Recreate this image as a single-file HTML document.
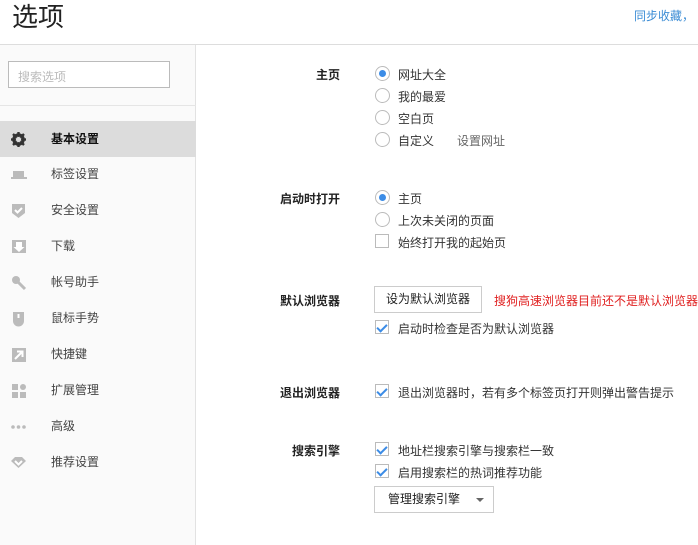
<!DOCTYPE html>
<html><head><meta charset="utf-8"><style>
*{margin:0;padding:0;box-sizing:border-box}
body{width:698px;height:545px;overflow:hidden;background:#fff;font-family:"Liberation Sans","Noto Sans CJK SC",sans-serif;font-size:12px;color:#333;position:relative}
.abs{position:absolute;white-space:nowrap}
.title{left:12px;top:0;font-size:26px;color:#222;line-height:34px}
.sync{right:4px;top:7px;color:#3c8dd5;font-size:12px}
.hline{left:0;top:44px;width:698px;height:1px;background:#ddd}
.side{left:0;top:45px;width:196px;height:500px;background:#fafafa;border-right:1px solid #e2e2e2}
.search{left:8px;top:61px;width:162px;height:27px;border:1px solid #bbb;background:#fff;color:#bbb;padding:6px 9px;font-size:12px}
.sep{left:0;top:105px;width:196px;height:1px;background:#e5e5e5}
.item{left:0;width:196px;height:36px;line-height:36px;padding-left:51px;font-size:12px;color:#444}
.item.sel{background:#dcdcdc;color:#111;font-weight:bold}
.ic{position:absolute;left:10px;top:10px;width:17px;height:17px}
.lbl{font-weight:bold;color:#222;text-align:right;width:120px;left:220px}
.radio{width:15px;height:15px;border:1px solid #bbb;border-radius:50%;background:#fff}
.radio.on::after{content:"";position:absolute;left:3px;top:3px;width:7px;height:7px;border-radius:50%;background:#3c8ce6}
.cb{width:14px;height:14px;border:1px solid #bbb;background:#fff}
.cb.on::after{content:"";position:absolute;left:3px;top:1px;width:4px;height:8px;border:solid #3c8ce6;border-width:0 2px 2px 0;transform:rotate(45deg)}
.t{color:#333}
.btn{border:1px solid #ccc;background:#fff;color:#222;text-align:center;line-height:25px}
</style></head><body>
<div class="abs title">选项</div>
<div class="abs sync">同步收藏，</div>
<div class="abs hline"></div>
<div class="abs side"></div>
<div class="abs search">搜索选项</div>
<div class="abs sep"></div>

<div class="abs item sel" style="top:121px"><svg class="ic" viewBox="0 0 17 17"><circle cx="8.5" cy="8.5" r="5" fill="none" stroke="#333" stroke-width="2.6"/><g stroke="#333" stroke-width="2.4"><line x1="8.5" y1="1" x2="8.5" y2="16"/><line x1="1" y1="8.5" x2="16" y2="8.5"/><line x1="3" y1="3" x2="14" y2="14"/><line x1="14" y1="3" x2="3" y2="14"/></g><circle cx="8.5" cy="8.5" r="2.6" fill="#dcdcdc"/></svg>基本设置</div>
<div class="abs item" style="top:156px"><svg class="ic" viewBox="0 0 17 17"><rect x="3" y="5" width="11" height="6" fill="#bbb"/><rect x="1" y="11" width="16" height="2" fill="#bbb"/></svg>标签设置</div>
<div class="abs item" style="top:192px"><svg class="ic" viewBox="0 0 17 17"><path d="M2 2h13v9l-6.5 5L2 11z" fill="#bbb"/><path d="M5 8l2.5 2.5L12 6" stroke="#fff" stroke-width="2" fill="none"/></svg>安全设置</div>
<div class="abs item" style="top:228px"><svg class="ic" viewBox="0 0 17 17"><rect x="2" y="2" width="14" height="13" fill="#bbb"/><path d="M6 4v5H3.5l5.5 5 5.5-5H12V4z" fill="#fff"/></svg>下载</div>
<div class="abs item" style="top:264px"><svg class="ic" viewBox="0 0 17 17"><circle cx="6" cy="6" r="4" fill="#bbb"/><path d="M8 8l7 7" stroke="#bbb" stroke-width="3"/></svg>帐号助手</div>
<div class="abs item" style="top:300px"><svg class="ic" viewBox="0 0 17 17"><path d="M3 2h11v9a5.5 5.5 0 0 1-11 0z" fill="#bbb"/><rect x="7.5" y="4" width="2" height="4" fill="#fff"/></svg>鼠标手势</div>
<div class="abs item" style="top:336px"><svg class="ic" viewBox="0 0 17 17"><rect x="2" y="2" width="14" height="14" fill="#bbb"/><path d="M5 13L12 6M7 5.5h5.5V11" stroke="#fff" stroke-width="2" fill="none"/></svg>快捷键</div>
<div class="abs item" style="top:372px"><svg class="ic" viewBox="0 0 17 17" fill="#bbb"><rect x="2" y="2" width="6" height="6"/><circle cx="13" cy="5" r="3"/><rect x="2" y="10" width="6" height="6"/><rect x="10" y="10" width="6" height="6"/></svg>扩展管理</div>
<div class="abs item" style="top:408px"><svg class="ic" viewBox="0 0 17 17" fill="#bbb"><circle cx="3" cy="9" r="1.8"/><circle cx="8.5" cy="9" r="1.8"/><circle cx="14" cy="9" r="1.8"/></svg>高级</div>
<div class="abs item" style="top:444px"><svg class="ic" viewBox="0 0 17 17"><path d="M1 7l4-4h7l4 4-7.5 7z" fill="#bbb"/><path d="M5 7l3.5 3.5L12 7" stroke="#fff" stroke-width="2" fill="none"/></svg>推荐设置</div>

<div class="abs lbl" style="top:66px">主页</div>
<div class="abs radio on" style="left:375px;top:66px"></div><div class="abs t" style="left:398px;top:66px">网址大全</div>
<div class="abs radio" style="left:375px;top:88px"></div><div class="abs t" style="left:398px;top:88px">我的最爱</div>
<div class="abs radio" style="left:375px;top:110px"></div><div class="abs t" style="left:398px;top:110px">空白页</div>
<div class="abs radio" style="left:375px;top:132px"></div><div class="abs t" style="left:398px;top:132px">自定义</div><div class="abs" style="left:457px;top:132px;color:#666">设置网址</div>

<div class="abs lbl" style="top:190px">启动时打开</div>
<div class="abs radio on" style="left:375px;top:190px"></div><div class="abs t" style="left:398px;top:190px">主页</div>
<div class="abs radio" style="left:375px;top:212px"></div><div class="abs t" style="left:398px;top:212px">上次未关闭的页面</div>
<div class="abs cb" style="left:375px;top:234px"></div><div class="abs t" style="left:398px;top:234px">始终打开我的起始页</div>

<div class="abs lbl" style="top:292px">默认浏览器</div>
<div class="abs btn" style="left:374px;top:286px;width:108px;height:27px">设为默认浏览器</div>
<div class="abs" style="left:494px;top:292px;color:#e02020">搜狗高速浏览器目前还不是默认浏览器</div>
<div class="abs cb on" style="left:375px;top:320px"></div><div class="abs t" style="left:398px;top:320px">启动时检查是否为默认浏览器</div>

<div class="abs lbl" style="top:384px">退出浏览器</div>
<div class="abs cb on" style="left:375px;top:384px"></div><div class="abs t" style="left:398px;top:384px">退出浏览器时，若有多个标签页打开则弹出警告提示</div>

<div class="abs lbl" style="top:442px">搜索引擎</div>
<div class="abs cb on" style="left:375px;top:442px"></div><div class="abs t" style="left:398px;top:442px">地址栏搜索引擎与搜索栏一致</div>
<div class="abs cb on" style="left:375px;top:464px"></div><div class="abs t" style="left:398px;top:464px">启用搜索栏的热词推荐功能</div>
<div class="abs btn" style="left:374px;top:486px;width:120px;height:27px;text-align:left;padding-left:13px">管理搜索引擎<span style="position:absolute;left:101px;top:11px;border:4px solid transparent;border-top:4px solid #666;border-bottom:0"></span></div>
</body></html>
